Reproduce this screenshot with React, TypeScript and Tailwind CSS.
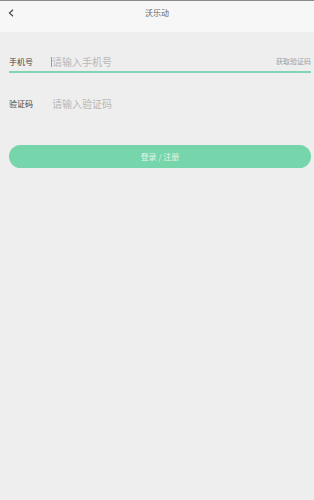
export default function App() {
  return (
    <div
      className="h-[500px] w-full overflow-hidden bg-[#eeeeee]"
      style={{ fontFamily: '"Noto Sans CJK SC", "Noto Sans", sans-serif' }}
    >
      <div className="h-px bg-[#8a8a8a]" />
      <header className="relative flex h-[31px] items-center justify-center bg-[#f7f7f7]">
        <svg
          className="absolute left-[8px] top-[8px]"
          width="6"
          height="8"
          viewBox="0 0 6 8"
          fill="none"
          stroke="#555"
          strokeWidth="1.4"
        >
          <path d="M5 0.8 L1.5 4 L5 7.2" />
        </svg>
        <h1 className="-mt-[8px] text-[8px] leading-none text-[#666]">沃乐动</h1>
      </header>

      <div className="pl-[9px] pr-[3px] pt-[20px]">
        <div className="flex h-[21px] items-center border-b-2 border-[#80d6b2]">
          <span className="w-[42px] text-[8px] text-[#444]">手机号</span>
          <div className="flex flex-1 items-center">
            <span className="h-[10px] w-px bg-[#4cbf92]" />
            <span className="text-[10px] text-[#b8b8b8]">请输入手机号</span>
          </div>
          <span className="text-[7px] text-[#a0a0a0]">获取验证码</span>
        </div>

        <div className="mt-[20px] flex h-[21px] items-center">
          <span className="w-[43px] text-[8px] text-[#444]">验证码</span>
          <span className="text-[10px] text-[#b8b8b8]">请输入验证码</span>
        </div>

        <button
          type="button"
          className="mt-[31px] flex h-[23px] w-full items-center justify-center rounded-full bg-[#76d5ab] text-[8px] text-[#e0f6ec]"
        >
          登录 / 注册
        </button>
      </div>
    </div>
  )
}
